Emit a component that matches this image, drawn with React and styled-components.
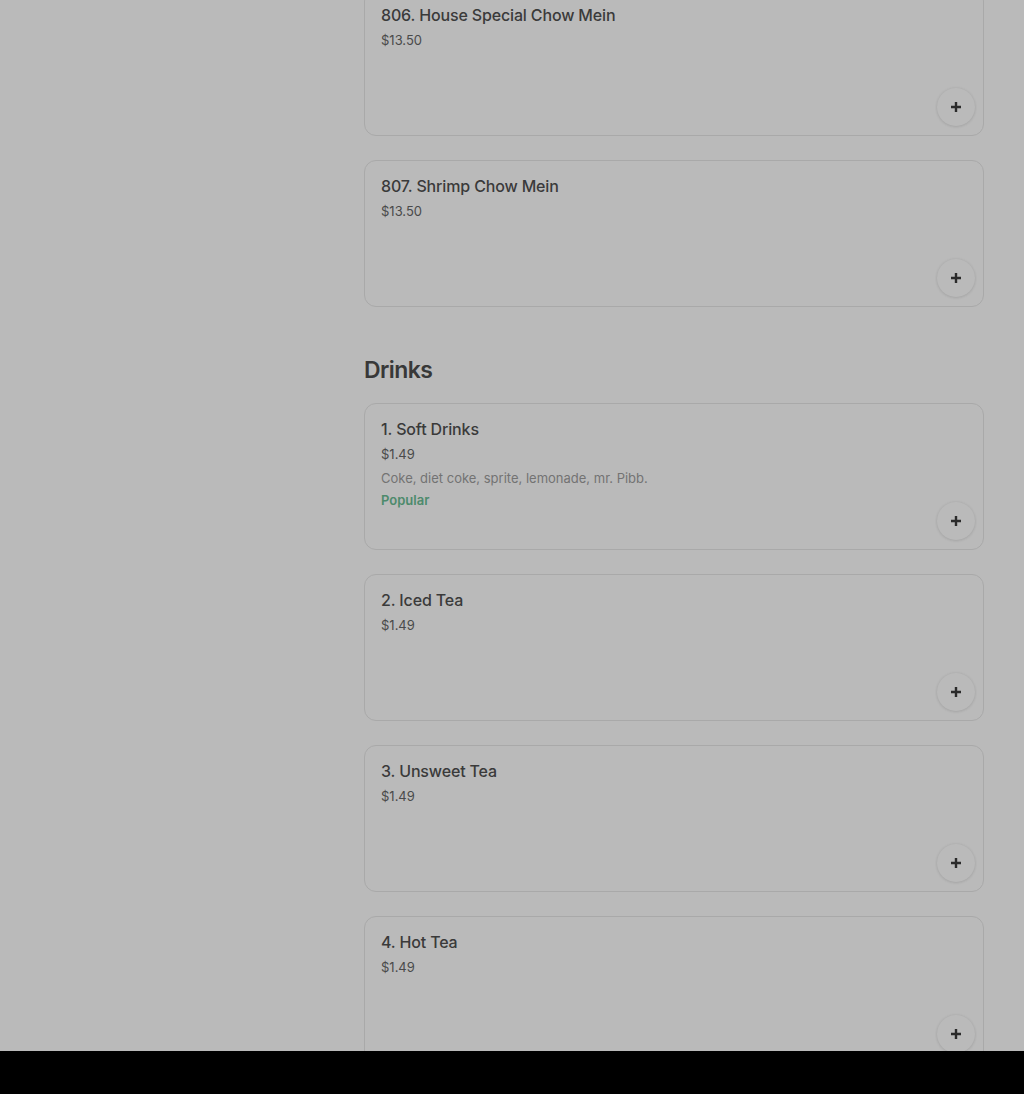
import React from "react";
import styled, { createGlobalStyle } from "styled-components";

const GlobalStyle = createGlobalStyle`
  html, body {
    margin: 0;
    padding: 0;
    background: #000;
  }
  body {
    font-family: Inter, "Noto Sans", sans-serif;
  }
`;

const Viewport = styled.div`
  height: 1051px;
  overflow: hidden;
  background-color: #bababa;
`;

const Layout = styled.div`
  display: flex;
  margin-top: -11px;
`;

const Sidebar = styled.div`
  width: 364px;
  flex-shrink: 0;
`;

const Menu = styled.div`
  width: 620px;
  display: flex;
  flex-direction: column;
`;

const Section = styled.section`
  display: flex;
  flex-direction: column;
  gap: 24px;
`;

const SectionTitle = styled.h2`
  margin: 47px 0 17px;
  font-size: 23px;
  line-height: 32px;
  font-weight: 600;
  letter-spacing: -0.6px;
  color: #383838;
`;

const Card = styled.div`
  position: relative;
  box-sizing: border-box;
  height: 147px;
  padding: 14px 16px 0;
  border: 1px solid #a9a9a9;
  border-radius: 12px;
`;

const ItemName = styled.div`
  font-size: 16px;
  line-height: 22px;
  font-weight: 500;
  letter-spacing: -0.15px;
  color: #3a3a3a;
`;

const Price = styled.div`
  margin-top: 4px;
  font-size: 13px;
  line-height: 20px;
  color: #4a4a4a;
`;

const Description = styled.div`
  margin-top: 4px;
  font-size: 13px;
  line-height: 20px;
  color: #737373;
`;

const Tag = styled.div`
  margin-top: 2px;
  font-size: 13px;
  line-height: 20px;
  font-weight: 600;
  color: #4d8a6c;
`;

const AddButton = styled.button`
  position: absolute;
  right: 8px;
  bottom: 9px;
  width: 38px;
  height: 38px;
  padding: 0;
  border: none;
  border-radius: 50%;
  background: #bababa;
  box-shadow: 0 0 3px rgba(0, 0, 0, 0.08), 0 1px 3px rgba(0, 0, 0, 0.08);
  display: flex;
  align-items: center;
  justify-content: center;
  cursor: pointer;
`;

const PlusIcon = () => (
  <svg width="12" height="12" viewBox="0 0 12 12">
    <path d="M6 1v10M1 6h10" stroke="#2b2b2b" strokeWidth="2.4" />
  </svg>
);

const MenuItem = ({ name, price, description, tag }) => (
  <Card>
    <ItemName>{name}</ItemName>
    <Price>{price}</Price>
    {description && <Description>{description}</Description>}
    {tag && <Tag>{tag}</Tag>}
    <AddButton aria-label="Add">
      <PlusIcon />
    </AddButton>
  </Card>
);

const chowMein = [
  { name: "806. House Special Chow Mein", price: "$13.50" },
  { name: "807. Shrimp Chow Mein", price: "$13.50" },
];

const drinks = [
  {
    name: "1. Soft Drinks",
    price: "$1.49",
    description: "Coke, diet coke, sprite, lemonade, mr. Pibb.",
    tag: "Popular",
  },
  { name: "2. Iced Tea", price: "$1.49" },
  { name: "3. Unsweet Tea", price: "$1.49" },
  { name: "4. Hot Tea", price: "$1.49" },
];

const App = () => (
  <>
    <GlobalStyle />
    <Viewport>
      <Layout>
        <Sidebar />
        <Menu>
          <Section>
            {chowMein.map((item) => (
              <MenuItem key={item.name} {...item} />
            ))}
          </Section>
          <SectionTitle>Drinks</SectionTitle>
          <Section>
            {drinks.map((item) => (
              <MenuItem key={item.name} {...item} />
            ))}
          </Section>
        </Menu>
      </Layout>
    </Viewport>
  </>
);

export default App;
